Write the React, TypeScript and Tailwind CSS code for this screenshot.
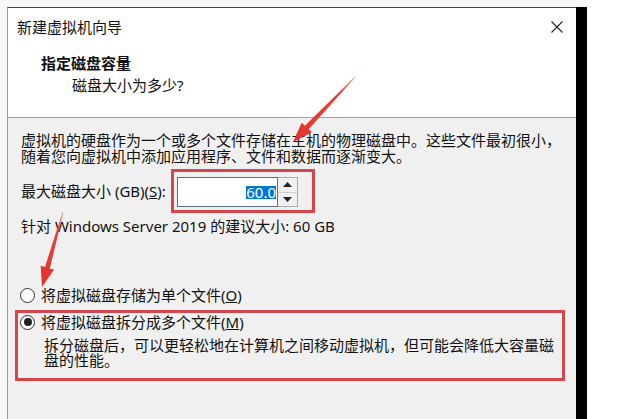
import React from 'react';

const Radio: React.FC<{ checked?: boolean }> = ({ checked }) => (
  <span className="w-[15px] h-[15px] rounded-full border border-[#333] bg-white flex items-center justify-center shrink-0">
    {checked && <span className="w-[8px] h-[8px] rounded-full bg-[#1f1f1f]" />}
  </span>
);

const Arrows: React.FC = () => (
  <svg className="absolute inset-0 pointer-events-none" width="627" height="419" viewBox="0 0 627 419">
    <defs>
      <linearGradient id="a1" x1="355" y1="77" x2="293" y2="142" gradientUnits="userSpaceOnUse">
        <stop offset="0" stopColor="#f4a0a0" />
        <stop offset="0.25" stopColor="#e8403a" />
        <stop offset="1" stopColor="#e5302b" />
      </linearGradient>
      <linearGradient id="a2" x1="63" y1="212" x2="42" y2="287" gradientUnits="userSpaceOnUse">
        <stop offset="0" stopColor="#f4a0a0" />
        <stop offset="0.25" stopColor="#e8403a" />
        <stop offset="1" stopColor="#e5302b" />
      </linearGradient>
    </defs>
    {/* arrow pointing at the size box */}
    <polygon
      fill="url(#a1)"
      points="355.4,77.3 308.6,129.2 311.9,132.3 293,142 301.7,122.7 305,125.8 354.6,76.7"
    />
    {/* arrow pointing at the radio options */}
    <polygon
      fill="url(#a2)"
      points="63.5,212.1 49.8,268.4 54.1,269.6 42,287 40.7,265.8 45,267 62.5,211.9"
    />
  </svg>
);

export default function App() {
  return (
    <div className="relative w-[627px] h-[419px] overflow-hidden flex bg-[#f7f7f7] text-[15px] text-[#111] font-['Noto_Sans','Noto_Sans_CJK_SC',sans-serif]">
      <div className="w-[7px] shrink-0" />

      {/* Dialog window */}
      <div className="mt-[7px] w-[569px] shrink-0 flex flex-col border-l border-t border-l-[#9a9a9a] border-t-[#444] bg-[#f0f0f0]">
        {/* Header */}
        <div className="h-[110px] shrink-0 bg-white border-b border-[#a0a0a0] flex flex-col">
          <div className="flex items-center justify-between pt-[11px] pl-[9px] pr-[13px] leading-[16px]">
            <span>新建虚拟机向导</span>
            <svg width="12" height="12" viewBox="0 0 12 12">
              <path d="M0.5 0.5 L11.5 11.5 M11.5 0.5 L0.5 11.5" stroke="#222" strokeWidth="1.1" />
            </svg>
          </div>
          <div className="mt-[20px] ml-[33px] leading-[16px] font-bold">指定磁盘容量</div>
          <div className="mt-[6px] ml-[64px] leading-[16px]">磁盘大小为多少?</div>
        </div>

        {/* Body */}
        <div className="flex flex-col">
          <p className="mt-[14px] ml-[13px] w-[545px] leading-[16px]">
            虚拟机的硬盘作为一个或多个文件存储在主机的物理磁盘中。这些文件最初很小，随着您向虚拟机中添加应用程序、文件和数据而逐渐变大。
          </p>

          <div className="mt-[5px] ml-[13px] flex items-center">
            <span className="w-[150px] leading-[16px] whitespace-nowrap">
              最大磁盘大小 (GB)(<span className="underline">S</span>):
            </span>
            <div className="border-[3px] border-[#d3474c] pl-[3px] pt-[5px] pr-[14px] pb-[3px] flex">
              <div className="w-[101px] h-[30px] bg-white border border-[#5a7090] flex items-center justify-end pr-[1px]">
                <span className="bg-[#0078d7] text-white leading-[13px]">60.0</span>
              </div>
              <div className="w-[20px] h-[30px] flex flex-col border border-l-0 border-[#adadad] bg-[#f0f0f0]">
                <div className="flex-1 flex items-center justify-center border-b border-[#cfcfcf]">
                  <svg width="9" height="5" viewBox="0 0 9 5">
                    <path d="M0 5 L4.5 0 L9 5 Z" fill="#222" />
                  </svg>
                </div>
                <div className="flex-1 flex items-center justify-center">
                  <svg width="9" height="5" viewBox="0 0 9 5">
                    <path d="M0 0 L4.5 5 L9 0 Z" fill="#222" />
                  </svg>
                </div>
              </div>
            </div>
          </div>

          <div className="mt-[5px] ml-[13px] leading-[16px]">针对 Windows Server 2019 的建议大小: 60 GB</div>

          <label className="mt-[53px] ml-[12px] flex items-center gap-[6px] leading-[16px]">
            <Radio />
            <span>
              将虚拟磁盘存储为单个文件(<span className="underline">O</span>)
            </span>
          </label>

          <div className="mt-[7px] ml-[7px] w-[550px] border-[3px] border-[#d3474c] pl-[2px] pt-[1px] pb-[10px]">
            <label className="flex items-center gap-[6px] leading-[16px]">
              <Radio checked />
              <span>
                将虚拟磁盘拆分成多个文件(<span className="underline">M</span>)
              </span>
            </label>
            <p className="mt-[8px] ml-[24px] w-[510px] leading-[15px]">
              拆分磁盘后，可以更轻松地在计算机之间移动虚拟机，但可能会降低大容量磁盘的性能。
            </p>
          </div>
        </div>
      </div>

      {/* dark edge of the window behind */}
      <div className="mt-[7px] w-[11px] shrink-0 bg-black" />
      <div className="flex-1 bg-white" />

      <Arrows />
    </div>
  );
}
